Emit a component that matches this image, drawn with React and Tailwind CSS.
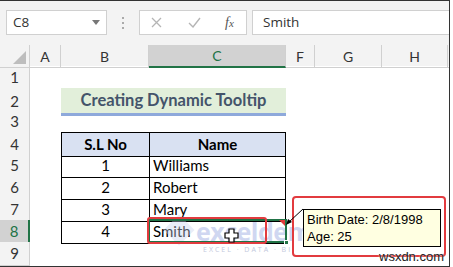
import React from 'react';

const cols = 'grid grid-cols-[30px_31px_88px_137px_29px_67px_66px_1px]';
const sheetFont = "font-['Lato','Liberation_Sans',sans-serif]";

const rows = [
  { n: 1 },
  { n: 2, title: 'Creating Dynamic Tooltip' },
  { n: 3 },
  { n: 4, head: true, b: 'S.L No', c: 'Name' },
  { n: 5, b: '1', c: 'Williams' },
  { n: 6, b: '2', c: 'Robert' },
  { n: 7, b: '3', c: 'Mary' },
  { n: 8, b: '4', c: 'Smith', active: true },
  { n: 9 },
];

const FormulaBar = () => (
  <div className="h-[44px] flex items-start pt-[9px] pl-[6px] bg-[#f3f3f3] font-['Open_Sans',sans-serif] text-[#333]">
    {/* name box */}
    <div className="w-[101px] h-[25px] bg-white border border-[#d0d0d0] flex items-center justify-between pl-[6px] pr-[6px] text-[13.5px]">
      <span>C8</span>
      <svg width="8" height="5" viewBox="0 0 8 5"><path d="M0 0h8L4 5z" fill="#777" /></svg>
    </div>
    <div className="w-[32px] h-[25px] flex flex-col items-center justify-center gap-[3px]">
      <span className="w-[2px] h-[2px] bg-[#aaa]" />
      <span className="w-[2px] h-[2px] bg-[#aaa]" />
      <span className="w-[2px] h-[2px] bg-[#aaa]" />
    </div>
    {/* cancel / enter / fx */}
    <div className="w-[108px] h-[25px] bg-white border border-[#d0d0d0] flex items-center">
      <svg className="ml-[11px]" width="11" height="11" viewBox="0 0 11 11"><path d="M1 1l9 9M10 1l-9 9" stroke="#b5b5b5" strokeWidth="1.3" /></svg>
      <svg className="ml-[26px]" width="13" height="11" viewBox="0 0 13 11"><path d="M1 6l4 4 7-9" stroke="#b5b5b5" strokeWidth="1.4" fill="none" /></svg>
      <span className="ml-[24px] italic font-['Liberation_Serif',serif] text-[14px] text-[#555]">f<span className="text-[11px]">x</span></span>
    </div>
    <div className="ml-[5px] flex-1 h-[25px] bg-white border border-[#d0d0d0] border-r-0 flex items-center pl-[10px] text-[13.5px]">Smith</div>
  </div>
);

const HeaderRow = () => (
  <div className={`${cols} h-[21px] bg-[#f3f3f3] text-[14px] text-[#333] ${sheetFont}`}>
    <div className="relative border-r border-b border-[#d0d0d0]">
      <svg className="absolute right-[3px] bottom-[3px]" width="13" height="13" viewBox="0 0 13 13"><path d="M13 0V13H0z" fill="#bdbdbd" /></svg>
    </div>
    {['A', 'B'].map((l) => (
      <div key={l} className="flex items-center justify-center border-r border-b border-[#d0d0d0]">{l}</div>
    ))}
    <div className="flex items-center justify-center bg-[#d2d2d2] text-[#217346] border-r border-[#d0d0d0] border-b-2 border-b-[#217346]">C</div>
    {['F', 'G', 'H'].map((l) => (
      <div key={l} className="flex items-center justify-center border-r border-b border-[#d0d0d0]">{l}</div>
    ))}
    <div className="border-b border-[#d0d0d0]" />
  </div>
);

const SheetRow = ({ r }) => {
  const inTable = r.b !== undefined;
  const top = r.head ? 'border-t' : '';
  return (
    <div className={`${cols} h-[22px] text-[15px] text-black ${sheetFont}`}>
      <div
        className={
          r.active
            ? 'flex items-center justify-center bg-[#d2d2d2] text-[#217346] border-b border-[#d0d0d0] border-r-2 border-r-[#217346]'
            : 'flex items-center justify-center bg-[#f3f3f3] text-[#333] border-r border-b border-[#d0d0d0]'
        }
      >
        {r.n}
      </div>
      <div />
      {r.title ? (
        <div className="col-span-2 flex items-center justify-center bg-[#e2efda] border-b-[3px] border-[#8ea9db] text-[#44546a] font-bold text-[16.5px]">
          {r.title}
        </div>
      ) : inTable ? (
        <>
          <div className={`flex items-center justify-center border-l border-b border-black ${top} ${r.head ? 'bg-[#d9e1f2] font-bold' : ''}`}>{r.b}</div>
          <div className={`flex items-center border-l border-r border-b border-black ${top} ${r.head ? 'bg-[#d9e1f2] font-bold justify-center' : 'pl-[3px]'}`}>{r.c}</div>
        </>
      ) : (
        <>
          <div />
          <div />
        </>
      )}
      <div />
      <div />
      <div />
      <div />
    </div>
  );
};

export default function App() {
  return (
    <div className="w-[453px] h-[267px] bg-white overflow-hidden">
      <div className="relative w-[450px] h-[267px] border-t border-r border-b border-[#333] bg-white">
        <FormulaBar />
        <HeaderRow />
        {rows.map((r) => (
          <SheetRow key={r.n} r={r} />
        ))}

        {/* exceldemy watermark */}
        <div className="absolute left-[168px] top-[218px] w-[22px] h-[22px] rotate-45 bg-[#c9d3ee] opacity-40" />
        <div className="absolute left-[196px] top-[219px] text-[25px] leading-[22px] font-bold font-['Open_Sans',sans-serif] text-[#aab8e6] opacity-55 tracking-[-0.5px]">
          exceldemy
        </div>
        <div className="absolute left-[203px] top-[245px] text-[7px] leading-[7px] font-['Open_Sans',sans-serif] tracking-[2px] text-[#c3c9dc]">
          EXCEL · DATA · BI
        </div>

        {/* selection of C8 */}
        <div className="absolute left-[148px] top-[218px] w-[139px] h-[24px] border-2 border-[#217346]" />
        <div className="absolute left-[284px] top-[239px] w-[5px] h-[5px] bg-[#217346] border border-white" />
        <svg className="absolute left-[279px] top-[219px]" width="6" height="6" viewBox="0 0 6 6"><path d="M0 0h6v6z" fill="#e03a3a" /></svg>

        {/* red highlight around Smith */}
        <div className="absolute left-[147px] top-[216px] w-[120px] h-[27px] border-2 border-[#e23b3f] rounded-[3px]" />

        {/* cursor */}
        <svg className="absolute left-[224px] top-[227px]" width="15" height="15" viewBox="0 0 15 15">
          <path d="M5 1h5v4h4v5h-4v4H5v-4H1V5h4z" fill="#fff" stroke="#000" strokeWidth="1.2" />
        </svg>

        {/* tooltip */}
        <div className="absolute left-[292px] top-[195px] w-[154px] h-[61px] border-2 border-[#e23b3f] rounded-[4px]" />
        <svg className="absolute left-[284px] top-[205px]" width="22" height="22" viewBox="0 0 22 22">
          <path d="M19 3L5 16" stroke="#000" strokeWidth="1" />
          <path d="M2 19l2-6 4 3z" fill="#000" />
        </svg>
        <div className="absolute left-[303px] top-[208px] w-[138px] h-[38px] bg-[#ffffe1] border border-black px-[3px] pt-[1px] font-['Liberation_Sans',sans-serif] text-[13px] leading-[17px] text-black">
          <p>Birth Date: 2/8/1998</p>
          <p>Age: 25</p>
        </div>
        <div className="absolute left-[379px] top-[249px] text-[13px] leading-[14px] font-['Liberation_Sans',sans-serif] text-[#222] [text-shadow:0_0_2px_#fff]">
          wsxdn.com
        </div>
      </div>
    </div>
  );
}
